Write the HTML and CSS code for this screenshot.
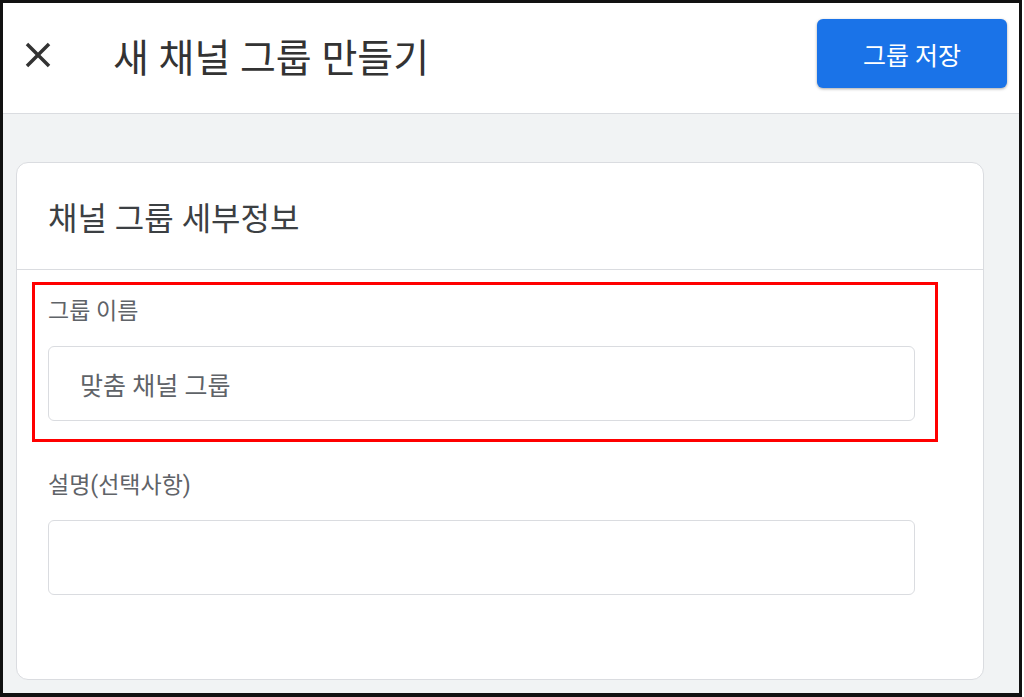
FILE: index.html
```html
<!DOCTYPE html>
<html lang="ko">
<head>
  <meta charset="utf-8">
  <title>새 채널 그룹 만들기</title>
  <link rel="stylesheet" href="styles.css">
</head>
<body>
  <div class="frame">
    <header class="topbar">
      <button class="close-btn" aria-label="닫기">
        <svg viewBox="0 0 24 24" width="42" height="42">
          <path d="M19 6.41L17.59 5 12 10.59 6.41 5 5 6.41 10.59 12 5 17.59 6.41 19 12 13.41 17.59 19 19 17.59 13.41 12z" fill="#333"/>
        </svg>
      </button>
      <h1 class="title">새 채널 그룹 만들기</h1>
      <button class="save-btn">그룹 저장</button>
    </header>

    <main class="content">
      <section class="card">
        <div class="card-head">채널 그룹 세부정보</div>
        <div class="card-body">
          <div class="field field-first">
            <div class="highlight"></div>
            <label class="field-label">그룹 이름</label>
            <div class="text-box">맞춤 채널 그룹</div>
          </div>
          <div class="field">
            <label class="field-label">설명(선택사항)</label>
            <div class="text-box"></div>
          </div>
        </div>
      </section>
    </main>
  </div>
</body>
</html>
```

FILE: styles.css
```css
body {
  margin: 0;
  background-color: #ffffff;
  font-family: Roboto, "Noto Sans CJK KR", sans-serif;
}
.frame {
  width: 1022px;
  height: 697px;
  box-sizing: border-box;
  border: 3px solid #111111;
  border-bottom-width: 4px;
  background-color: #f1f3f4;
  display: flex;
  flex-direction: column;
}
.topbar {
  height: 110px;
  background-color: #ffffff;
  border-bottom: 1px solid #dadce0;
  display: flex;
  align-items: center;
  padding: 0 12px 0 14px;
}
.close-btn {
  border: none;
  background: none;
  padding: 0;
  width: 42px;
  height: 42px;
  margin-top: -6px;
}
.close-btn svg {
  display: block;
}
.title {
  margin: -6px 0 0 54px;
  font-size: 39px;
  font-weight: 400;
  color: #333333;
  flex: 1;
}
.save-btn {
  width: 190px;
  height: 69px;
  margin-top: -9px;
  border: none;
  border-radius: 6px;
  background-color: #1a73e8;
  color: #ffffff;
  font-family: Roboto, "Noto Sans CJK KR", sans-serif;
  font-size: 25px;
  box-shadow: 0 1px 3px rgba(0, 0, 0, 0.35);
}
.content {
  flex: 1;
  padding: 48px 35px 0 13px;
}
.card {
  background-color: #ffffff;
  border: 1px solid #dadce0;
  border-radius: 12px;
}
.card-head {
  height: 106px;
  display: flex;
  align-items: center;
  padding-left: 31px;
  font-size: 32px;
  color: #3c4043;
  border-bottom: 1px solid #dadce0;
}
.card-body {
  padding: 29px 68px 84px 31px;
}
.field {
  position: relative;
}
.field-first {
  margin-bottom: 52px;
}
.highlight {
  position: absolute;
  left: -16px;
  top: -17px;
  width: 906px;
  height: 160px;
  box-sizing: border-box;
  border: 3px solid #ff0000;
}
.field-label {
  display: block;
  font-size: 23px;
  line-height: 26px;
  color: #5f6368;
  margin-bottom: 21px;
}
.text-box {
  height: 75px;
  box-sizing: border-box;
  border: 1px solid #dadce0;
  border-radius: 6px;
  padding-left: 31px;
  display: flex;
  align-items: center;
  font-size: 25px;
  color: #5f6368;
}
```
